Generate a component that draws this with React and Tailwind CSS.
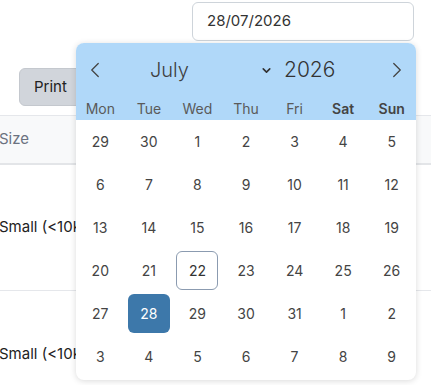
import { ChevronLeft, ChevronRight, ChevronDown } from "lucide-react";

const weekdays = ["Mon", "Tue", "Wed", "Thu", "Fri", "Sat", "Sun"];

const weeks = [
  [29, 30, 1, 2, 3, 4, 5],
  [6, 7, 8, 9, 10, 11, 12],
  [13, 14, 15, 16, 17, 18, 19],
  [20, 21, 22, 23, 24, 25, 26],
  [27, 28, 29, 30, 31, 1, 2],
  [3, 4, 5, 6, 7, 8, 9],
];

function DayCell({ day, today, selected }) {
  const base =
    "w-[42px] h-[39px] flex items-center justify-center rounded-[6px] text-[14px]";
  let cls = "text-[#444]";
  if (selected) cls = "bg-[#3d78aa] text-white";
  else if (today) cls = "border border-[#8b9bb0] text-[#333]";
  return (
    <div className="h-[43px] flex items-center justify-center">
      <div className={`${base} ${cls}`}>{day}</div>
    </div>
  );
}

export default function App() {
  return (
    <div className="relative w-[431px] h-[385px] overflow-hidden bg-white font-['Inter',sans-serif] text-[#222]">

      {/* DATE INPUT */}
      <div className="flex justify-end pr-[17px] pt-[2px]">
        <div className="w-[222px] h-[39px] border border-[#ced4da] rounded-[6px] flex items-center pl-[14px] text-[15px] text-[#333]">
          28/07/2026
        </div>
      </div>

      {/* PRINT */}
      <div className="pl-[19px] mt-[27px]">
        <button className="h-[38px] w-[90px] bg-[#d1d5db] border border-[#c4c8ce] rounded-[6px] text-left pl-[14px] text-[15px] text-[#222]">
          Print
        </button>
      </div>

      {/* TABLE */}
      <div className="mt-[9px]">
        <div className="h-[50px] bg-[#f8f9fa] border-t border-[#e5e7eb] border-b-2 border-b-[#e3e5e8] flex items-center -ml-[1px] text-[15px] text-[#6b7280]">
          Size
        </div>
        <div className="h-[126px] border-b border-[#e5e7eb] flex items-center -ml-[1px] text-[15px]">
          Small (&lt;10kg)
        </div>
        <div className="h-[126px] flex items-center -ml-[1px] text-[15px]">
          Small (&lt;10kg)
        </div>
      </div>

      {/* CALENDAR POPOVER */}
      <div className="absolute left-[76px] top-[43px] w-[340px] h-[337px] bg-white rounded-[8px] shadow-[0_1px_6px_rgba(0,0,0,0.15)] overflow-hidden">
        <div className="bg-[#b0d8f9] h-[77px]">

          {/* MONTH / YEAR */}
          <div className="h-[54px] flex items-center pl-[6px] pr-[6px]">
            <ChevronLeft className="text-[#444] shrink-0" size={26} strokeWidth={1.2} />
            <div className="w-[165px] flex items-center">
              <span className="ml-[42px] text-[20px] font-light text-[#3f3f3f]">July</span>
              <ChevronDown className="ml-auto text-[#333]" size={13} strokeWidth={3} />
            </div>
            <span className="ml-[11px] text-[21px] font-light text-[#333]">2026</span>
            <div className="flex-1" />
            <ChevronRight className="text-[#444] shrink-0" size={26} strokeWidth={1.2} />
          </div>

          {/* WEEKDAYS */}
          <div className="grid grid-cols-7 h-[23px] items-center text-[14px]">
            {weekdays.map((d) => (
              <div
                key={d}
                className={`text-center ${d === "Sat" || d === "Sun" ? "font-semibold text-[#444]" : "text-[#5a5a5a]"}`}
              >
                {d}
              </div>
            ))}
          </div>
        </div>

        {/* DAYS */}
        <div className="grid grid-cols-7">
          {weeks.map((w, wi) =>
            w.map((d, di) => (
              <DayCell
                key={`${wi}-${di}`}
                day={d}
                today={wi === 3 && d === 22}
                selected={wi === 4 && d === 28}
              />
            ))
          )}
        </div>
      </div>
    </div>
  );
}
